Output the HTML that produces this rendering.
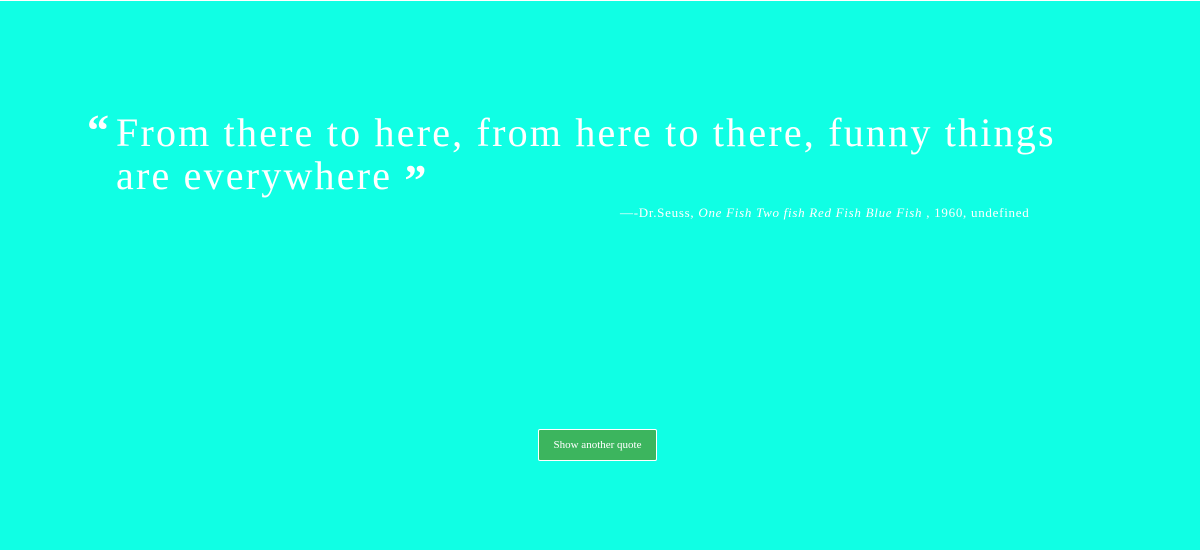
<!DOCTYPE html>
<html><head><style>
html,body{margin:0;padding:0;}
body{width:1200px;height:550px;background:#10ffe4;border-top:1px solid #fff;box-sizing:border-box;position:relative;overflow:hidden;font-family:"Liberation Serif",serif;color:#fff;}
.q{position:absolute;left:116px;top:110px;width:960px;font-size:40px;line-height:43px;letter-spacing:2.2px;}
.lq{position:absolute;left:-29px;top:-2px;font-size:44px;font-weight:bold;letter-spacing:0;}
.rq{font-size:44px;font-weight:bold;vertical-align:-6px;letter-spacing:0;line-height:0;}
.a{position:absolute;left:620px;top:204px;font-size:13px;white-space:nowrap;letter-spacing:0.72px;}
.b{position:absolute;left:538px;top:428px;width:119px;height:32px;box-sizing:border-box;border:1px solid #fff;border-radius:2px;background:#3cb55e;font-size:11px;text-align:center;line-height:30px;}
</style></head><body>
<div class="q"><span class="lq">“</span>From there to here, from here to there, funny things are everywhere <span class="rq">”</span></div>
<div class="a">—-Dr.Seuss, <i>One Fish Two fish Red Fish Blue Fish</i> , 1960, undefined</div>
<div class="b">Show another quote</div>
</body></html>
